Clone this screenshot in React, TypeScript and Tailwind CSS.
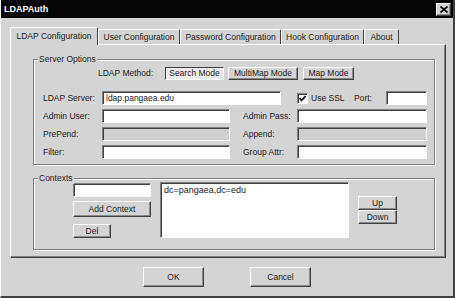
import React from 'react'

const raised = 'border border-t-white border-l-white border-r-[#404040] border-b-[#404040] shadow-[inset_-1px_-1px_0_#8a8a8a]'
const sunken = 'border border-t-[#808080] border-l-[#808080] border-r-white border-b-white shadow-[inset_1px_1px_0_#404040]'

function Button({ className = '', children }: { className?: string; children?: React.ReactNode }) {
    return (
        <div className={`${raised} bg-[#d4d4d4] flex items-center justify-center leading-none text-[#1a1a1a] ${className}`}>
            {children}
        </div>
    )
}

function Field({ className = '', value = '', disabled = false }: { className?: string; value?: string; disabled?: boolean }) {
    return (
        <div className={`${sunken} ${disabled ? 'bg-[#cfcfcf]' : 'bg-white'} h-[14px] flex items-center pl-[3px] leading-none ${className}`}>
            {value}
        </div>
    )
}

function Group({ title, className = '', children }: { title: string; className?: string; children?: React.ReactNode }) {
    return (
        <div className={`relative border border-[#808080] shadow-[inset_1px_1px_0_#fff,1px_1px_0_#fff] ${className}`}>
            <span className="absolute -top-[7px] left-[4px] px-[1px] bg-[#d4d4d4] leading-[12px]">{title}</span>
            {children}
        </div>
    )
}

const tabs = [
    { label: 'LDAP Configuration', w: 'w-[88px]', active: true },
    { label: 'User Configuration', w: 'w-[82px]' },
    { label: 'Password Configuration', w: 'w-[101px]' },
    { label: 'Hook Configuration', w: 'w-[83px]' },
    { label: 'About', w: 'w-[35px]' },
]

export default function App() {
    return (
        <div className="w-[455px] h-[298px] overflow-hidden bg-[#d4d4d4] font-['Liberation_Sans',Arial,sans-serif] text-[8.5px] text-[#1a1a1a] border-r-2 border-b-2 border-[#404040] border-l border-l-white">
            {/* Title bar */}
            <div className="h-[18px] bg-[#050505] flex items-center justify-between pl-[3px] pr-[2px]">
                <span className="text-white font-bold text-[9px] leading-none">LDAPAuth</span>
                <div className={`${raised} bg-[#d4d4d4] w-[15px] h-[13px] flex items-center justify-center`}>
                    <svg width="8" height="7" viewBox="0 0 8 7">
                        <path d="M0.5 0.5 L7.5 6.5 M7.5 0.5 L0.5 6.5" stroke="#000" strokeWidth="1.6" />
                    </svg>
                </div>
            </div>

            {/* Tabs */}
            <div className="relative z-10 mt-[9px] ml-[9px] h-[17px] flex items-end">
                {tabs.map((t) =>
                    t.active ? (
                        <div
                            key={t.label}
                            className={`${t.w} h-[18px] -mb-[1px] bg-[#d4d4d4] border-t border-l border-r border-t-white border-l-white border-r-[#404040] rounded-t-[2px] flex items-center justify-center pb-[1px]`}
                        >
                            {t.label}
                        </div>
                    ) : (
                        <div
                            key={t.label}
                            className={`${t.w} h-[15px] bg-[#d4d4d4] border-t border-l border-r border-t-white border-l-white border-r-[#404040] rounded-t-[2px] flex items-center justify-center`}
                        >
                            {t.label}
                        </div>
                    )
                )}
            </div>

            {/* Tab panel */}
            <div className="ml-[9px] w-[436px] h-[214px] border border-t-white border-l-white border-r-[#404040] border-b-[#404040] shadow-[inset_-1px_-1px_0_#808080] pt-[14px] pl-[22px]">
                <Group title="Server Options" className="w-[402px] h-[106px]">
                    <div className="flex items-center mt-[7px] pl-[64px] h-[13px]">
                        <span className="w-[67px]">LDAP Method:</span>
                        <div className="w-[59px] h-[13px] border border-t-[#404040] border-l-[#404040] border-r-white border-b-white bg-[#ececec] flex items-center justify-center leading-none">
                            Search Mode
                        </div>
                        <Button className="ml-[4px] w-[70px] h-[13px]">MultiMap Mode</Button>
                        <Button className="ml-[5px] w-[51px] h-[13px]">Map Mode</Button>
                    </div>

                    <div className="mt-[11px] pl-[9px] flex flex-col gap-[4px]">
                        <div className="flex items-center">
                            <span className="w-[59px]">LDAP Server:</span>
                            <Field className="w-[179px]" value="ldap.pangaea.edu" />
                            <div className="ml-[16px] w-[11px] h-[11px] bg-white border border-t-[#808080] border-l-[#808080] border-r-white border-b-white shadow-[inset_1px_1px_0_#404040] flex items-center justify-center">
                                <svg width="7" height="7" viewBox="0 0 7 7">
                                    <path d="M0.5 3 L2.5 5.5 L6.5 1" stroke="#000" strokeWidth="1.6" fill="none" />
                                </svg>
                            </div>
                            <span className="ml-[3px] w-[43px]">Use SSL</span>
                            <span className="w-[32px]">Port:</span>
                            <Field className="w-[41px]" />
                        </div>
                        <div className="flex items-center">
                            <span className="w-[59px]">Admin User:</span>
                            <Field className="w-[128px]" />
                            <span className="ml-[13px] w-[54px]">Admin Pass:</span>
                            <Field className="w-[130px]" />
                        </div>
                        <div className="flex items-center">
                            <span className="w-[59px]">PrePend:</span>
                            <Field className="w-[128px]" disabled />
                            <span className="ml-[13px] w-[54px]">Append:</span>
                            <Field className="w-[130px]" disabled />
                        </div>
                        <div className="flex items-center">
                            <span className="w-[59px]">Filter:</span>
                            <Field className="w-[128px]" />
                            <span className="ml-[13px] w-[54px]">Group Attr:</span>
                            <Field className="w-[130px]" />
                        </div>
                    </div>
                </Group>

                <Group title="Contexts" className="mt-[13px] w-[402px] h-[72px]">
                    <div className="flex items-start pt-[3px] pl-[39px]">
                        <div className="mt-[1px] w-[78px] flex flex-col">
                            <Field className="w-[78px]" />
                            <Button className="mt-[4px] w-[78px] h-[16px]">Add Context</Button>
                            <Button className="mt-[7px] w-[38px] h-[14px]">Del</Button>
                        </div>
                        <div className={`${sunken} ml-[9px] w-[189px] h-[56px] bg-white px-[3px] pt-[2px] text-[9px] leading-[11px]`}>
                            dc=pangaea,dc=edu
                        </div>
                        <div className="ml-[9px] mt-[14px] flex flex-col">
                            <Button className="w-[39px] h-[14px]">Up</Button>
                            <Button className="w-[39px] h-[14px]">Down</Button>
                        </div>
                    </div>
                </Group>
            </div>

            {/* Dialog buttons */}
            <div className="mt-[9px] flex justify-center gap-[46px]">
                <Button className="w-[61px] h-[20px] border-r-[#202020] border-b-[#202020]">OK</Button>
                <Button className="w-[61px] h-[20px] border-r-[#202020] border-b-[#202020]">Cancel</Button>
            </div>
        </div>
    )
}
